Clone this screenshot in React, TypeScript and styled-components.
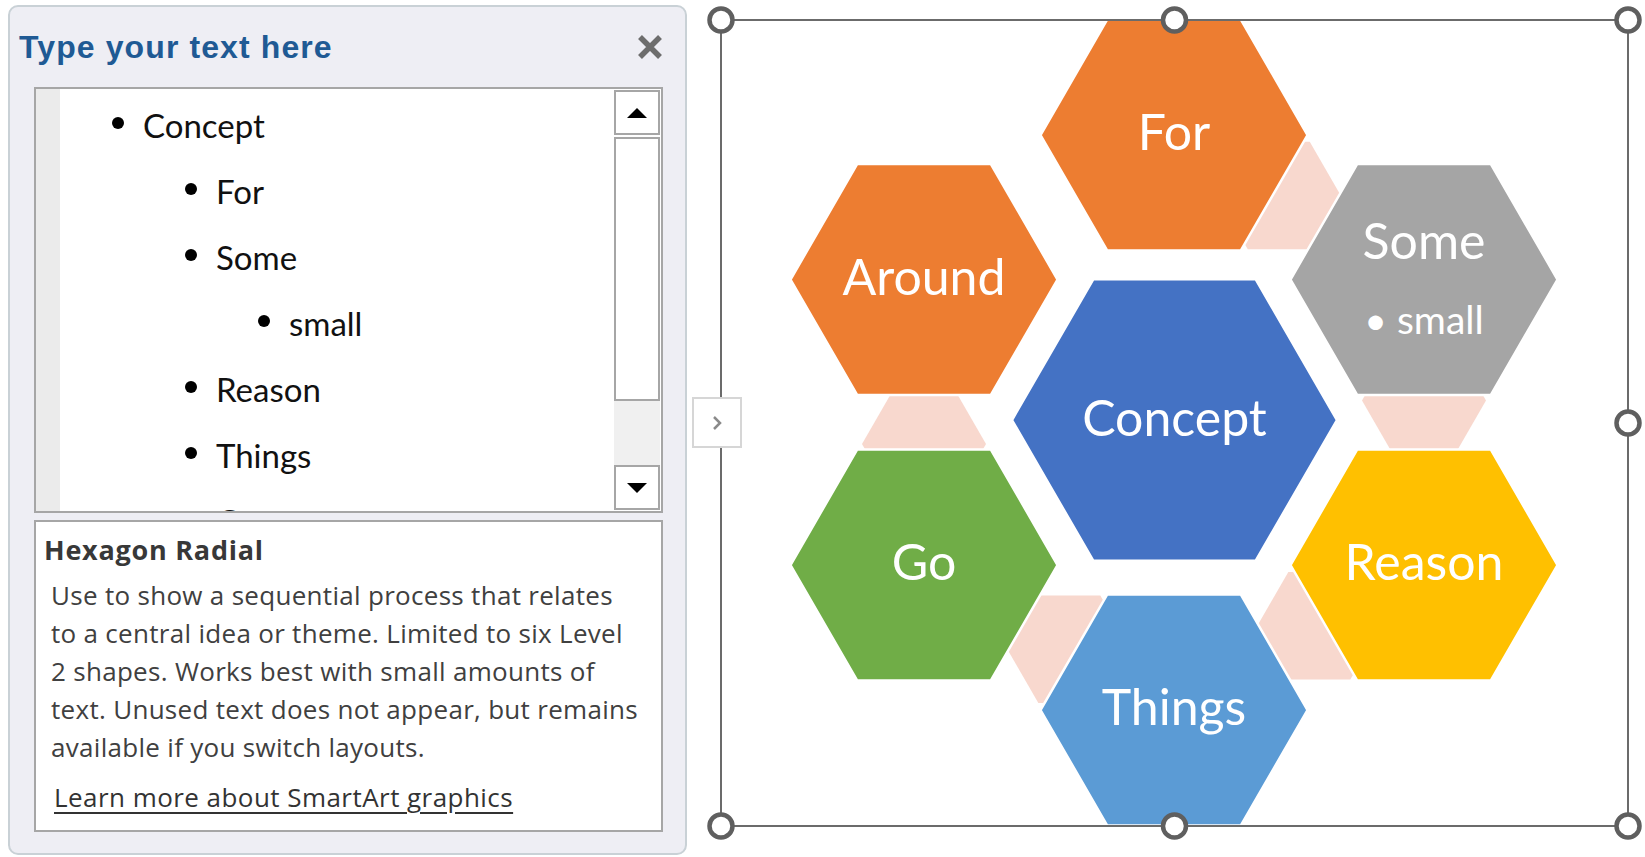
import React from 'react';
import styled, { createGlobalStyle } from 'styled-components';

const GlobalStyle = createGlobalStyle`
  html, body {
    margin: 0;
    padding: 0;
    background: #ffffff;
  }
  body {
    font-family: 'Open Sans', 'Liberation Sans', sans-serif;
  }
`;

const Page = styled.div`
  width: 1645px;
  height: 857px;
  display: flex;
  align-items: flex-start;
  overflow: hidden;
  background: #ffffff;
`;

const Pane = styled.aside`
  box-sizing: border-box;
  margin: 5px 0 0 8px;
  width: 679px;
  height: 850px;
  border: 2px solid #c9d1d6;
  border-radius: 10px;
  background: #eeeef4;
  display: flex;
  flex-direction: column;
`;

const PaneHeader = styled.header`
  height: 80px;
  display: flex;
  align-items: center;
  justify-content: space-between;
  padding: 0 22px 0 9px;
`;

const PaneTitle = styled.h1`
  margin: 0;
  font-family: 'Liberation Sans', Arial, sans-serif;
  font-weight: 700;
  font-size: 32px;
  letter-spacing: 1.1px;
  color: #1f5a94;
`;

const CloseButton = styled.button`
  width: 26px;
  height: 26px;
  padding: 0;
  border: none;
  background: transparent;
  display: flex;
  align-items: center;
  justify-content: center;
`;

const TextBox = styled.div`
  box-sizing: border-box;
  margin-left: 24px;
  width: 629px;
  height: 426px;
  border: 2px solid #a6a6a6;
  background: #ffffff;
  display: flex;
`;

const Gutter = styled.div`
  width: 24px;
  background: #ebebeb;
`;

const BulletList = styled.ul`
  flex: 1;
  margin: 0;
  padding: 3px 0 0;
  list-style: none;
  overflow: hidden;
`;

const Item = styled.li<{ $level: number }>`
  height: 66px;
  display: flex;
  align-items: center;
  padding-left: ${p => 52 + (p.$level - 1) * 73}px;
  font-family: Lato, 'Noto Sans', sans-serif;
  font-size: 33px;
  color: #111111;
`;

const Dot = styled.span`
  width: 12px;
  height: 12px;
  border-radius: 50%;
  background: #000000;
  margin: 0 19px 4px 0;
  flex-shrink: 0;
`;

const ScrollBar = styled.div`
  width: 47px;
  padding: 1px 1px 1px 0;
  box-sizing: border-box;
  display: flex;
  flex-direction: column;
  gap: 2px;
`;

const ScrollButton = styled.div`
  box-sizing: border-box;
  height: 45px;
  border: 2px solid #a6a6a6;
  background: #ffffff;
  display: flex;
  align-items: center;
  justify-content: center;
`;

const Thumb = styled.div`
  box-sizing: border-box;
  height: 264px;
  border: 2px solid #a6a6a6;
  background: #ffffff;
`;

const Track = styled.div`
  flex: 1;
  background: #f0f0f0;
  margin: -2px 0;
`;

const DescBox = styled.section`
  box-sizing: border-box;
  margin: 7px 0 0 24px;
  width: 629px;
  height: 312px;
  border: 2px solid #a6a6a6;
  background: #ffffff;
  padding: 11px 0 0 8px;
  color: #404040;
`;

const DescTitle = styled.h2`
  margin: 0;
  font-family: 'Open Sans', sans-serif;
  font-weight: 700;
  font-size: 27px;
  line-height: 34px;
  letter-spacing: 0.75px;
  color: #383838;
`;

const DescText = styled.p`
  margin: 9px 0 0 7px;
  font-family: 'Open Sans', sans-serif;
  font-size: 26px;
  line-height: 38px;
  white-space: nowrap;
  letter-spacing: 0.3px;
`;

const LearnLink = styled.a`
  display: inline-block;
  margin: 12px 0 0 10px;
  font-family: 'Open Sans', sans-serif;
  font-size: 26px;
  line-height: 38px;
  letter-spacing: 0.45px;
  color: #333333;
  text-decoration: underline;
  text-underline-offset: 5px;
`;

const Canvas = styled.div`
  position: relative;
  flex: 1;
  height: 857px;
`;

const Drawing = styled.svg`
  display: block;
  width: 100%;
  height: 100%;
`;

const ExpandTab = styled.button`
  position: absolute;
  left: 5px;
  top: 397px;
  width: 50px;
  height: 51px;
  box-sizing: border-box;
  padding: 0;
  border: 2px solid #d6d6d6;
  background: #ffffff;
  display: flex;
  align-items: center;
  justify-content: center;
`;

// only the rows that scroll into view; Around sits below the fold
const items = [
  { text: 'Concept', level: 1 },
  { text: 'For', level: 2 },
  { text: 'Some', level: 2 },
  { text: 'small', level: 3 },
  { text: 'Reason', level: 2 },
  { text: 'Things', level: 2 },
  { text: 'Go', level: 2 },
];

const hex = (cx: number, cy: number, r: number) => {
  const h = (r * Math.sqrt(3)) / 2;
  return [
    [cx + r, cy],
    [cx + r / 2, cy + h],
    [cx - r / 2, cy + h],
    [cx - r, cy],
    [cx - r / 2, cy - h],
    [cx + r / 2, cy - h],
  ]
    .map(p => p.join(','))
    .join(' ');
};

const R = 133.5;
const nodes = [
  { label: 'For', x: 1174, y: 135, fill: '#ed7d31' },
  { label: 'Some', x: 1424, y: 279.5, fill: '#a5a5a5' },
  { label: 'Reason', x: 1424, y: 565, fill: '#ffc000' },
  { label: 'Things', x: 1174, y: 710, fill: '#5b9bd5' },
  { label: 'Go', x: 924, y: 565, fill: '#70ad47' },
  { label: 'Around', x: 924, y: 279.5, fill: '#ed7d31' },
];

// pink links sit on the line to the next node, ~121px out from the first
const links = nodes.slice(0, 5).map((n, i) => {
  const next = nodes[i + 1];
  const dx = next.x - n.x;
  const dy = next.y - n.y;
  const len = Math.hypot(dx, dy);
  return { x: n.x + (dx / len) * 121, y: n.y + (dy / len) * 121 };
});

const frame = { left: 721, right: 1628, top: 20, bottom: 826 };
const midX = (frame.left + frame.right) / 2;
const midY = (frame.top + frame.bottom) / 2;
const handles = [
  [frame.left, frame.top],
  [midX, frame.top],
  [frame.right, frame.top],
  [frame.right, midY],
  [frame.left, frame.bottom],
  [midX, frame.bottom],
  [frame.right, frame.bottom],
];

const Diagram = () => (
  <Drawing viewBox="687 0 958 857">
    {links.map((l, i) => (
      <polygon key={i} points={hex(l.x, l.y, 62)} fill="#f8d8ce" />
    ))}
    {nodes.map(n => (
      <polygon key={n.label} points={hex(n.x, n.y, R)} fill={n.fill} stroke="#ffffff" strokeWidth={2.5} />
    ))}
    <polygon points={hex(midX, 420, 162.5)} fill="#4472c4" stroke="#ffffff" strokeWidth={2.5} />
    <g fontFamily="Lato, 'Noto Sans', sans-serif" fill="#ffffff" textAnchor="middle">
      {nodes
        .filter(n => n.label !== 'Some')
        .map(n => (
          <text key={n.label} x={n.x} y={n.y + 15} fontSize={50}>
            {n.label}
          </text>
        ))}
      <text x={1424} y={259} fontSize={50}>
        Some
      </text>
      <text x={1424} y={334} fontSize={39}>
        • small
      </text>
      <text x={midX} y={436} fontSize={50}>
        Concept
      </text>
    </g>
    <rect
      x={frame.left}
      y={frame.top}
      width={frame.right - frame.left}
      height={frame.bottom - frame.top}
      fill="none"
      stroke="#6b6b6b"
      strokeWidth={2}
    />
    {handles.map(([x, y], i) => (
      <circle key={i} cx={x} cy={y} r={11.5} fill="#ffffff" stroke="#5f5f5f" strokeWidth={4.5} />
    ))}
  </Drawing>
);

export default function App() {
  return (
    <>
      <GlobalStyle />
      <Page>
        <Pane>
          <PaneHeader>
            <PaneTitle>Type your text here</PaneTitle>
            <CloseButton aria-label="Close">
              <svg width="26" height="26" viewBox="0 0 26 26">
                <path d="M3 3 L23 23 M23 3 L3 23" stroke="#6d6d6d" strokeWidth="5.5" />
              </svg>
            </CloseButton>
          </PaneHeader>
          <TextBox>
            <Gutter />
            <BulletList>
              {items.map(it => (
                <Item key={it.text} $level={it.level}>
                  <Dot />
                  {it.text}
                </Item>
              ))}
            </BulletList>
            <ScrollBar>
              <ScrollButton>
                <svg width="20" height="10" viewBox="0 0 20 10">
                  <polygon points="10,0 20,10 0,10" fill="#000" />
                </svg>
              </ScrollButton>
              <Thumb />
              <Track />
              <ScrollButton>
                <svg width="20" height="10" viewBox="0 0 20 10">
                  <polygon points="0,0 20,0 10,10" fill="#000" />
                </svg>
              </ScrollButton>
            </ScrollBar>
          </TextBox>
          <DescBox>
            <DescTitle>Hexagon Radial</DescTitle>
            <DescText>
              Use to show a sequential process that relates
              <br />
              to a central idea or theme. Limited to six Level
              <br />
              2 shapes. Works best with small amounts of
              <br />
              text. Unused text does not appear, but remains
              <br />
              available if you switch layouts.
            </DescText>
            <LearnLink href="#">Learn more about SmartArt graphics</LearnLink>
          </DescBox>
        </Pane>
        <Canvas>
          <Diagram />
          <ExpandTab aria-label="Expand text pane">
            <svg width="12" height="18" viewBox="0 0 12 18">
              <polyline points="3,3 9,9 3,15" fill="none" stroke="#8a8a8a" strokeWidth="2.5" />
            </svg>
          </ExpandTab>
        </Canvas>
      </Page>
    </>
  );
}
